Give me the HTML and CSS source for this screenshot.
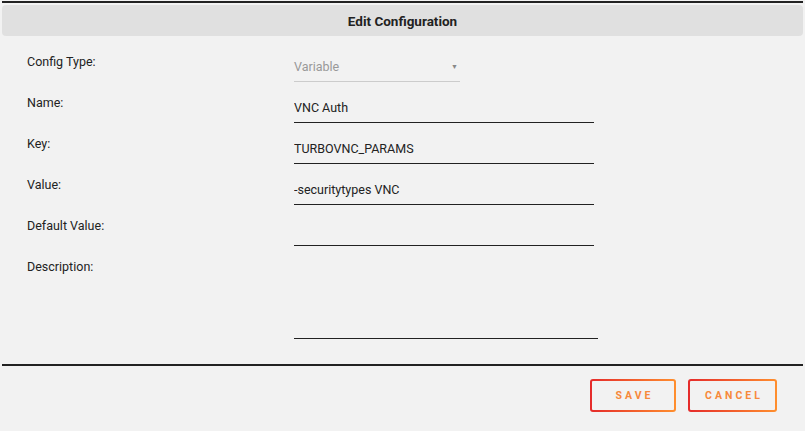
FILE: index.html
```html
<!DOCTYPE html>
<html lang="en">
<head>
    <meta charset="UTF-8">
    <meta name="viewport" content="width=device-width, initial-scale=1.0">
    <title>Edit Configuration</title>
    <link rel="stylesheet" href="styles.css">
</head>
<body>
    <div class="dialog">
        <div class="dialog-title">Edit Configuration</div>

        <div class="form">
            <div class="row">
                <label>Config Type:</label>
                <div class="select">
                    <span>Variable</span>
                    <span class="arrow">&#9660;</span>
                </div>
            </div>
            <div class="row">
                <label>Name:</label>
                <input type="text" value="VNC Auth">
            </div>
            <div class="row">
                <label>Key:</label>
                <input type="text" value="TURBOVNC_PARAMS">
            </div>
            <div class="row">
                <label>Value:</label>
                <input type="text" value="-securitytypes VNC">
            </div>
            <div class="row">
                <label>Default Value:</label>
                <input type="text" value="">
            </div>
            <div class="row">
                <label>Description:</label>
                <textarea></textarea>
            </div>
        </div>

        <div class="actions">
            <button class="btn">SAVE</button>
            <button class="btn btn-cancel">CANCEL</button>
        </div>
    </div>
</body>
</html>
```

FILE: styles.css
```css
body {
    margin: 0;
    font-family: Roboto, "Liberation Sans", sans-serif;
    font-size: 12.5px;
    color: #222;
    background-color: #f2f2f2;
}
.dialog {
    margin: 1px 2px 0;
    border-top: 2px solid #222;
    height: 430px;
    box-sizing: border-box;
}
.dialog-title {
    margin-top: 2px;
    height: 31px;
    line-height: 33px;
    background: #e0e0e0;
    border-radius: 4px;
    text-align: center;
    font-size: 13.5px;
    font-weight: bold;
}
.form {
    padding: 18px 0 0 25px;
    border-bottom: 2px solid #222;
    padding-bottom: 25px;
}
.row {
    display: grid;
    grid-template-columns: 267px 1fr;
    height: 41px;
    align-items: start;
}
.row:last-child {
    height: auto;
}
.row label {
    line-height: 16px;
}
.row input, .row textarea, .select {
    margin-top: 5px;
    width: 300px;
    box-sizing: border-box;
    padding: 0 0 6px;
    border: none;
    border-bottom: 1px solid #222;
    background: transparent;
    font-family: inherit;
    font-size: 12.5px;
    line-height: 16px;
    color: #222;
    outline: none;
}
.row textarea {
    width: 304px;
    height: 75px;
    resize: none;
}
.select {
    width: 166px;
    display: flex;
    justify-content: space-between;
    color: #999;
    border-bottom-color: #ccc;
}
.select .arrow {
    font-size: 7px;
    margin-right: 2px;
    color: #888;
}
.actions {
    display: flex;
    justify-content: flex-end;
    gap: 12px;
    padding: 13px 26px 0 0;
}
.btn {
    width: 86px;
    height: 33px;
    border: 2px solid transparent;
    border-radius: 3px;
    background: linear-gradient(#f2f2f2, #f2f2f2) padding-box,
                linear-gradient(90deg, #e52b2b, #ff8f2e) border-box;
    color: #f7893a;
    font-family: inherit;
    font-size: 10.5px;
    font-weight: bold;
    letter-spacing: 3px;
    padding: 0 0 0 3px;
}
.btn-cancel {
    width: 89px;
}
```
